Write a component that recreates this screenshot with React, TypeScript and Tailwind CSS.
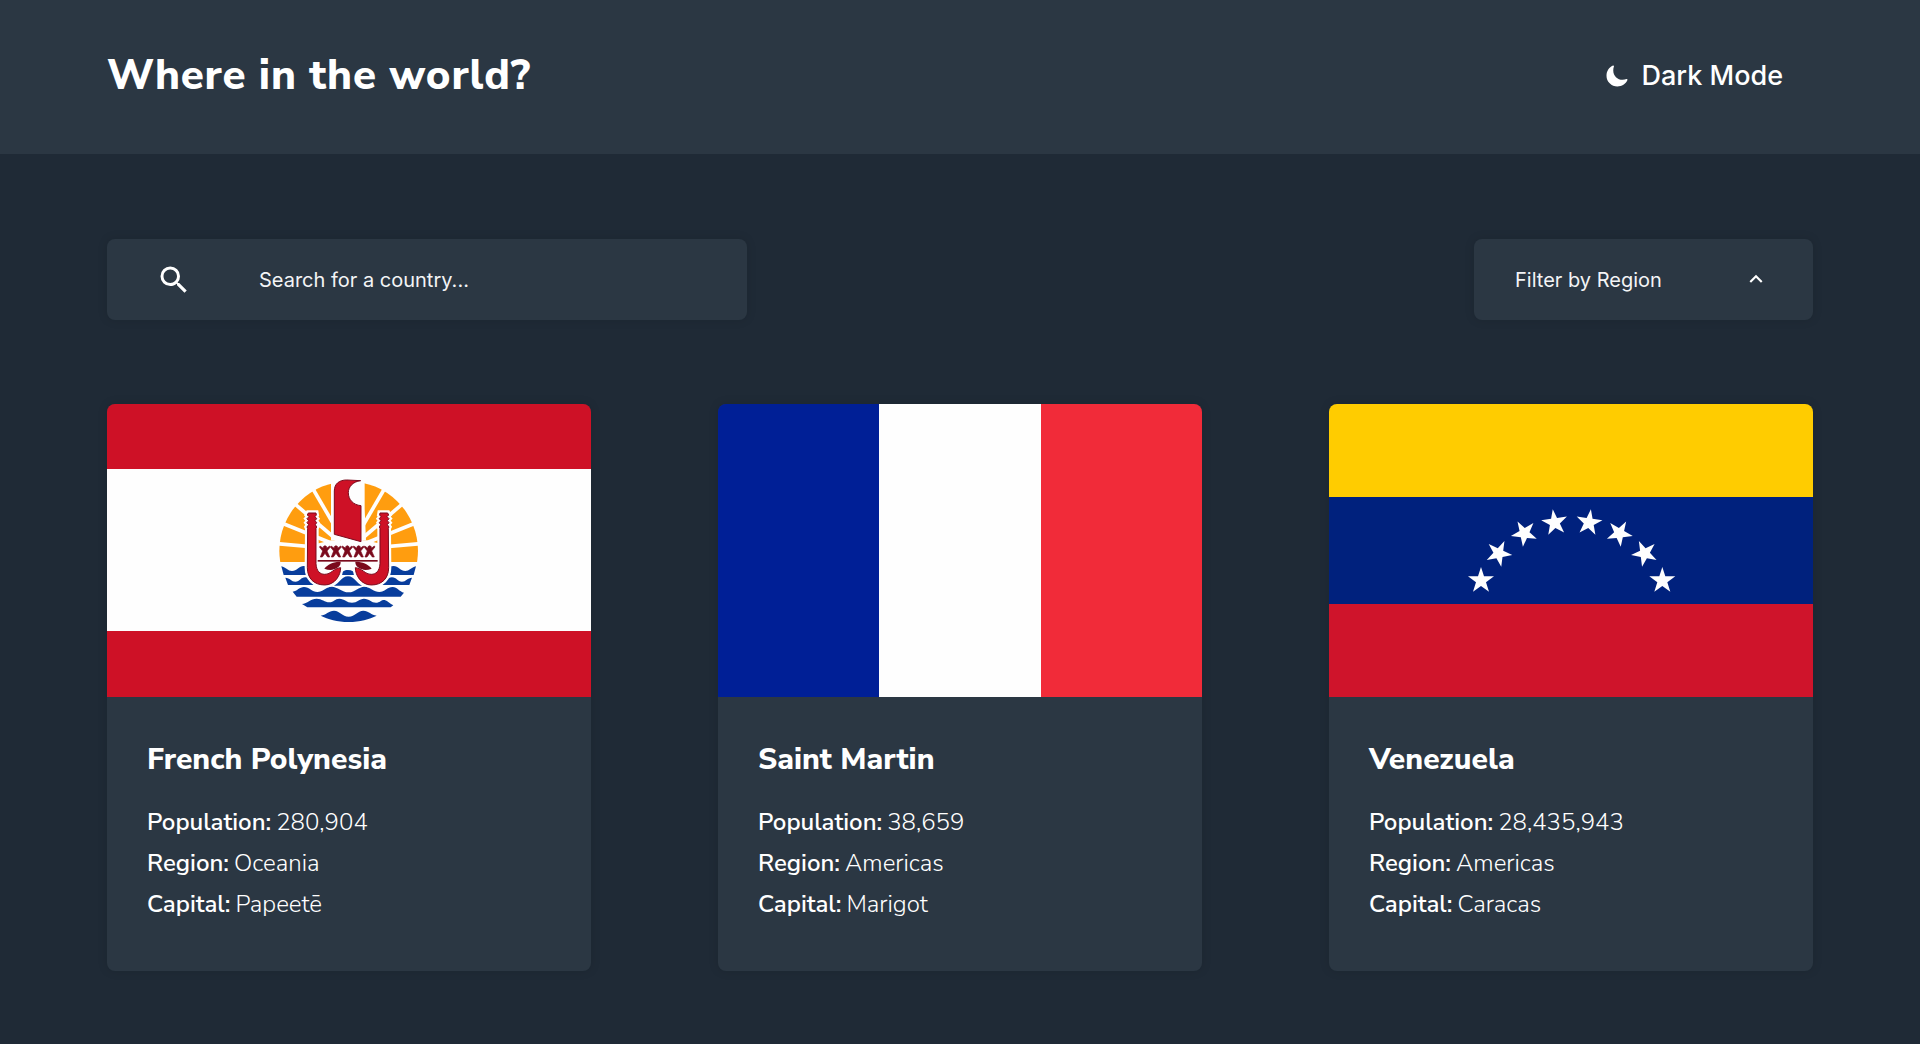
import type { ReactNode } from "react";
import { IoMoon } from "react-icons/io5";
import { MdExpandLess, MdSearch } from "react-icons/md";

interface Country {
  name: string;
  population: string;
  region: string;
  capital: string;
  flag: ReactNode;
}

function Flag({ label, children }: { label: string; children: ReactNode }) {
  return (
    <svg
      viewBox="0 0 484 293"
      preserveAspectRatio="none"
      role="img"
      aria-label={label}
      className="block aspect-[484/293] w-full"
    >
      {children}
    </svg>
  );
}

const rays: [number, number][] = [
  [20, 236],
  [20, 168],
  [62, 106],
  [122, 60],
  [196, 20],
  [276, 20],
  [350, 60],
  [410, 106],
  [452, 168],
  [452, 236],
];

const hook =
  "M115 144 L138 144 L139 150 L135 155 L140 161 L135 167 L140 173 L136 179 L140 186 L138 190 L138 296 C139 318 150 328 164 328 C184 328 190 310 212 308 C212 332 194 360 164 360 C132 360 112 340 112 308 L113 190 L111 186 L116 179 L111 173 L116 167 L111 161 L117 155 L112 150 Z";

const leaf = "M163 311 C174 297 190 290 212 290 C212 302 205 308 192 313 C184 316 174 315 163 311 Z";

const canoeist =
  "M150 243 L160 250 L160 245 Q165 239 170 245 L170 250 L179 243 L181 246 L171 258 L179 276 L173 276 L165 265 L157 276 L151 276 L158 258 L149 247 Z";

function FrenchPolynesiaFlag() {
  return (
    <Flag label="Flag of French Polynesia">
      <rect width="484" height="293" fill="#ce1126" />
      <rect y="65" width="484" height="162" fill="#fefefe" />
      <g transform="translate(163 61) scale(0.3333)">
        <clipPath id="sky">
          <rect x="0" y="0" width="480" height="291" />
        </clipPath>
        <g clipPath="url(#sky)">
          <circle cx="236" cy="257" r="208" fill="#ff9d0f" />
          <g stroke="#fefefe" strokeWidth="11">
            {rays.map(([x, y]) => (
              <line key={`${x}-${y}`} x1="236" y1="255" x2={x} y2={y} />
            ))}
          </g>
        </g>
        <path d="M183 30 H284 V132 L288 226 H183 Z" fill="#fefefe" />
        <path d="M140 236 L185 226 H288 L332 236 V292 H140 Z" fill="#fefefe" />
        <path
          d="M193 78 C193 56 208 45 230 45 L272 47 C248 50 235 66 235 83 C235 104 250 120 273 122 L273 230 L193 208 Z"
          fill="#ce1126"
          stroke="#7a0a1c"
          strokeWidth="3"
        />
        <g fill="#083d9c">
          <path d="M34 304 C48 308 54 318 66 318 C80 318 88 303 101 303 C110 303 115 306 120 310 L120 330 L41 330 Z" />
          <path d="M438 304 C424 308 418 318 406 318 C392 318 384 303 371 303 C362 303 357 306 352 310 L352 330 L431 330 Z" />
          <path d="M208 330 C218 320 222 315 234 315 C246 315 252 320 260 330 Z" />
          <path d="M46 338 C60 338 64 350 76 350 C90 350 92 337 106 337 C120 337 124 350 150 352 L150 360 L54 360 Z" />
          <path d="M426 338 C412 338 408 350 396 350 C382 350 380 337 366 337 C352 337 348 350 322 352 L322 360 L418 360 Z" />
          <path d="M192 362 C208 356 214 334 234 334 C254 334 260 356 276 362 Z" />
          <path d="M68 380 C82 378 88 366 102 366 C118 366 126 381 142 381 C158 381 168 365 185 365 C202 365 216 382 236 382 C256 382 266 365 283 365 C300 365 312 381 328 381 C344 381 352 366 368 366 C382 366 388 380 402 383 L392 395 L80 395 Z" />
          <path d="M96 417 C112 416 122 401 140 401 C156 401 164 412 178 412 C192 412 194 401 208 401 C224 401 230 413 246 413 C262 413 268 401 282 401 C298 401 304 413 318 413 C330 413 334 403 344 405 C354 408 360 417 370 421 L362 427 L112 427 Z" />
          <path d="M152 452 C168 450 176 437 192 437 C210 437 216 455 236 455 C256 455 262 437 280 437 C296 437 304 450 320 452 C298 463 270 471 236 471 C202 471 174 463 152 452 Z" />
        </g>
        <g fill="#fefefe" stroke="#fefefe" strokeWidth="16">
          <path d={hook} />
          <path d={hook} transform="translate(468 0) scale(-1 1)" />
        </g>
        <g fill="#7a0a1c">
          <path d={leaf} />
          <path d={leaf} transform="translate(468 0) scale(-1 1)" />
          <rect x="143" y="285" width="180" height="5" />
          {[0, 33, 67, 101, 134].map((dx) => (
            <path key={dx} d={canoeist} transform={`translate(${dx} 0)`} stroke="#7a0a1c" strokeWidth="2" />
          ))}
        </g>
        <g fill="#ce1126" stroke="#7a0a1c" strokeWidth="3">
          <path d={hook} />
          <path d={hook} transform="translate(468 0) scale(-1 1)" />
        </g>
      </g>
    </Flag>
  );
}

function SaintMartinFlag() {
  return (
    <Flag label="Flag of Saint Martin">
      <rect width="162" height="293" fill="#001f96" />
      <rect x="161" width="162" height="293" fill="#fefefe" />
      <rect x="323" width="161" height="293" fill="#f12b39" />
    </Flag>
  );
}

const stars: [number, number, number][] = [
  [93, 272, 0],
  [146, 190, 25],
  [223, 130, -30],
  [314, 98, -8],
  [417, 98, 8],
  [508, 130, 30],
  [584, 190, -25],
  [637, 272, 0],
];

function VenezuelaFlag() {
  return (
    <Flag label="Flag of Venezuela">
      <rect width="484" height="93" fill="#ffcc00" />
      <rect y="93" width="484" height="107" fill="#00217d" />
      <rect y="200" width="484" height="93" fill="#cf142b" />
      <g transform="translate(121 86) scale(0.3333)" fill="#fefefe">
        {stars.map(([x, y, angle]) => (
          <polygon
            key={x}
            points="0,-41 9,-13 39,-13 15,5 24,33 0,16 -24,33 -15,5 -39,-13 -9,-13"
            transform={`translate(${x} ${y}) rotate(${angle})`}
          />
        ))}
      </g>
    </Flag>
  );
}

const countries: Country[] = [
  {
    name: "French Polynesia",
    population: "280,904",
    region: "Oceania",
    capital: "Papeetē",
    flag: <FrenchPolynesiaFlag />,
  },
  {
    name: "Saint Martin",
    population: "38,659",
    region: "Americas",
    capital: "Marigot",
    flag: <SaintMartinFlag />,
  },
  {
    name: "Venezuela",
    population: "28,435,943",
    region: "Americas",
    capital: "Caracas",
    flag: <VenezuelaFlag />,
  },
];

function Detail({ term, value }: { term: string; value: string }) {
  return (
    <div className="flex gap-[5px]">
      <dt className="font-semibold">{term}:</dt>
      <dd className="font-light">{value}</dd>
    </div>
  );
}

function CountryCard({ country }: { country: Country }) {
  return (
    <article className="overflow-hidden rounded-lg bg-[#2b3743] shadow-[0_0_9px_2px_rgba(0,0,0,0.08)]">
      {country.flag}
      <div className="px-10 pt-[43px] pb-[46px]">
        <h2 className="text-[30px] leading-10 font-extrabold">{country.name}</h2>
        <dl className="mt-[22px] text-2xl leading-[41px]">
          <Detail term="Population" value={country.population} />
          <Detail term="Region" value={country.region} />
          <Detail term="Capital" value={country.capital} />
        </dl>
      </div>
    </article>
  );
}

export default function App() {
  return (
    <div className="min-h-screen bg-[#1f2a36] font-['Nunito_Sans','Nunito','Open_Sans',sans-serif] text-white">
      <header className="flex items-center justify-between bg-[#2b3743] px-[107px] pt-[47px] pb-[49px]">
        <h1 className="text-[42px] leading-[58px] font-extrabold tracking-[0.02em]">Where in the world?</h1>
        <button
          type="button"
          className="flex items-center gap-[13px] pr-[30px] font-['Inter',sans-serif] text-[27px] leading-9 font-medium"
        >
          <IoMoon className="size-6" aria-hidden="true" />
          Dark Mode
        </button>
      </header>

      <main className="px-[107px] pt-[85px] pb-[73px]">
        <div className="flex items-center justify-between font-['Inter',sans-serif] text-xl text-gray-100">
          <label className="flex h-[81px] w-[640px] items-center gap-[67px] rounded-lg bg-[#2b3743] pr-10 pl-[49px] shadow-[0_0_9px_2px_rgba(0,0,0,0.08)]">
            <MdSearch className="size-9 shrink-0 text-white" aria-hidden="true" />
            <input
              type="text"
              aria-label="Search for a country"
              placeholder="Search for a country..."
              className="min-w-0 flex-1 bg-transparent outline-none placeholder:text-gray-100"
            />
          </label>
          <div className="relative w-[339px]">
            <select
              aria-label="Filter by Region"
              className="h-[81px] w-full appearance-none rounded-lg bg-[#2b3743] pr-20 pl-[41px] shadow-[0_0_9px_2px_rgba(0,0,0,0.08)] outline-none"
            >
              <option>Filter by Region</option>
            </select>
            <MdExpandLess
              className="pointer-events-none absolute top-[27px] right-11 size-[26px] text-white"
              aria-hidden="true"
            />
          </div>
        </div>

        <section className="mt-[84px] grid grid-cols-3 gap-[127px]">
          {countries.map((country) => (
            <CountryCard key={country.name} country={country} />
          ))}
        </section>
      </main>
    </div>
  );
}
